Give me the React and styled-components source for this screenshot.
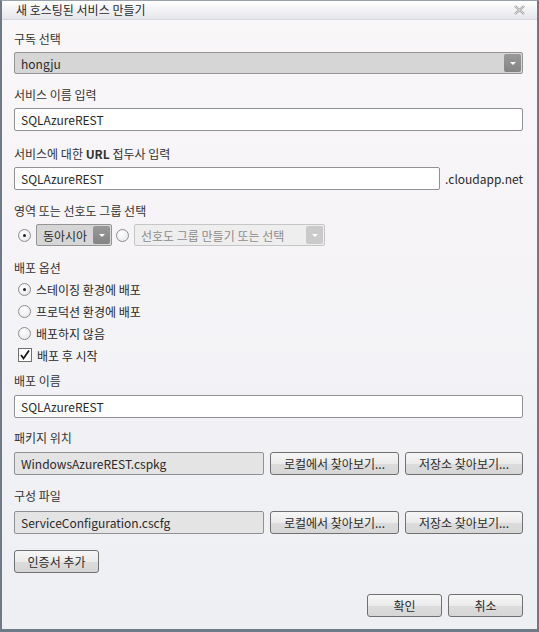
import styled, { createGlobalStyle } from "styled-components";

const Global = createGlobalStyle`
  html, body { margin: 0; padding: 0; background: #fff; }
  body { font-family: "Noto Sans CJK KR", "Noto Sans", sans-serif; }
`;

const Window = styled.div`
  width: 539px;
  height: 632px;
  box-sizing: border-box;
  border: 2px solid #6f7a88;
  border-top: 1px solid #9aa3ad;
  border-bottom-width: 3px;
  display: flex;
  flex-direction: column;
  background: linear-gradient(to bottom, #faf7f9 0%, #f6f4f7 35%, #edeff3 100%);
  color: #2a2a2a;
  font-size: 12px;
`;

const TitleBar = styled.div`
  height: 18px;
  flex-shrink: 0;
  display: flex;
  align-items: center;
  justify-content: space-between;
  padding: 0 12px 0 14px;
  background: linear-gradient(to bottom, #ffffff, #e6e6ec);
  border-bottom: 1px solid #d6d6de;
  font-size: 12px;
  line-height: 18px;
  color: #2a2a2a;
`;

const Body = styled.div`
  flex: 1;
  display: flex;
  flex-direction: column;
  padding: 11px 14px 0 12px;
`;

const Label = styled.div`
  height: 16px;
  line-height: 16px;
  font-size: 12px;
  color: #333;
  margin-top: ${p => p.$top || 0}px;
  margin-bottom: ${p => p.$bottom ?? 5}px;
`;

const Select = styled.div`
  height: 22px;
  box-sizing: border-box;
  width: ${p => p.$w || "100%"};
  display: flex;
  align-items: center;
  border: 1px solid ${p => (p.$disabled ? "#c6c6c6" : "#959595")};
  border-radius: 2px;
  background: ${p => (p.$disabled ? "#eeeeee" : "#d6d6d6")};
  color: ${p => (p.$disabled ? "#8c8c8c" : "#2a2a2a")};
  padding-left: 6px;
  padding-right: 1px;
  font-size: 12px;
`;

const SelectText = styled.span`
  flex: 1;
`;

const Arrow = styled.span`
  width: 17px;
  height: 18px;
  border-radius: 2px;
  background: ${p => (p.$disabled ? "#cacaca" : "linear-gradient(to bottom, #999, #848484)")};
  display: flex;
  align-items: center;
  justify-content: center;
  &::after {
    content: "";
    border-left: 3px solid transparent;
    border-right: 3px solid transparent;
    border-top: 3px solid #fff;
  }
`;

const Input = styled.div`
  height: 23px;
  box-sizing: border-box;
  flex: ${p => (p.$grow ? 1 : "none")};
  width: ${p => p.$w || "auto"};
  border: 1px solid #8f9194;
  border-radius: 2px;
  background: ${p => (p.$readonly ? "#e4e4e4" : "#ffffff")};
  padding-left: 6px;
  line-height: 21px;
  font-size: 12px;
  color: #2a2a2a;
`;

const Row = styled.div`
  display: flex;
  align-items: center;
  gap: ${p => p.$gap ?? 6}px;
  margin-top: ${p => p.$top || 0}px;
`;

const Suffix = styled.span`
  font-size: 12px;
  color: #2a2a2a;
`;

const Radio = styled.span`
  width: 13px;
  height: 13px;
  box-sizing: border-box;
  border-radius: 50%;
  border: 1px solid #8b8d90;
  background: radial-gradient(circle at 40% 35%, #ffffff, #e2e3e6);
  display: inline-flex;
  align-items: center;
  justify-content: center;
  flex-shrink: 0;
  &::after {
    content: "";
    width: 3px;
    height: 3px;
    border-radius: 50%;
    background: ${p => (p.$checked ? "#222" : "transparent")};
  }
`;

const Check = styled.span`
  width: 14px;
  height: 14px;
  box-sizing: border-box;
  border: 1px solid #707070;
  background: #fff;
  display: inline-flex;
  align-items: center;
  justify-content: center;
  flex-shrink: 0;
`;

const Option = styled.div`
  height: 22px;
  display: flex;
  align-items: center;
  gap: 5px;
  padding-left: 4px;
  font-size: 12px;
  color: #2a2a2a;
`;

const Button = styled.div`
  height: 23px;
  box-sizing: border-box;
  width: ${p => p.$w}px;
  border: 1px solid #707070;
  border-radius: 3px;
  background: linear-gradient(to bottom, #f6f6f6 0%, #ebebeb 50%, #dcdcdc 51%, #d6d6d6 100%);
  display: flex;
  align-items: center;
  justify-content: center;
  font-size: 12px;
  color: #2a2a2a;
  flex-shrink: 0;
`;

const Footer = styled.div`
  display: flex;
  justify-content: flex-end;
  gap: 6px;
  margin-top: 21px;
`;

function CloseIcon() {
  return (
    <svg width="11" height="10" viewBox="0 0 11 10">
      <path d="M1 1 L10 9 M10 1 L1 9" stroke="#9a9a9a" strokeWidth="2.2" fill="none" />
      <path d="M1 1 L10 9 M10 1 L1 9" stroke="#f4f4f4" strokeWidth="0.8" fill="none" />
    </svg>
  );
}

function CheckMark() {
  return (
    <svg width="12" height="12" viewBox="0 0 12 12">
      <path d="M2 6 L4.5 9.5 L10 1.5" stroke="#1a1a1a" strokeWidth="1.8" fill="none" />
    </svg>
  );
}

export default function App() {
  return (
    <>
      <Global />
      <Window>
        <TitleBar>
          <span>새 호스팅된 서비스 만들기</span>
          <CloseIcon />
        </TitleBar>
        <Body>
          <Label>구독 선택</Label>
          <Select>
            <SelectText>hongju</SelectText>
            <Arrow />
          </Select>

          <Label $top={13}>서비스 이름 입력</Label>
          <Input>SQLAzureREST</Input>

          <Label $top={15}>
            서비스에 대한 <b>URL</b> 접두사 입력
          </Label>
          <Row $gap={5}>
            <Input $grow>SQLAzureREST</Input>
            <Suffix>.cloudapp.net</Suffix>
          </Row>

          <Label $top={13}>영역 또는 선호도 그룹 선택</Label>
          <Row $gap={0}>
            <Option>
              <Radio $checked />
              <Select $w="76px">
                <SelectText>동아시아</SelectText>
                <Arrow />
              </Select>
            </Option>
            <Option>
              <Radio />
              <Select $w="191px" $disabled>
                <SelectText>선호도 그룹 만들기 또는 선택</SelectText>
                <Arrow $disabled />
              </Select>
            </Option>
          </Row>

          <Label $top={14} $bottom={2}>배포 옵션</Label>
          <Option>
            <Radio $checked />
            스테이징 환경에 배포
          </Option>
          <Option>
            <Radio />
            프로덕션 환경에 배포
          </Option>
          <Option>
            <Radio />
            배포하지 않음
          </Option>
          <Option>
            <Check>
              <CheckMark />
            </Check>
            배포 후 시작
          </Option>

          <Label $top={7} $bottom={6}>배포 이름</Label>
          <Input>SQLAzureREST</Input>

          <Label $top={12} $bottom={6}>패키지 위치</Label>
          <Row $gap={6}>
            <Input $w="250px" $readonly>WindowsAzureREST.cspkg</Input>
            <Button $w={129}>로컬에서 찾아보기...</Button>
            <Button $w={118}>저장소 찾아보기...</Button>
          </Row>

          <Label $top={13} $bottom={7}>구성 파일</Label>
          <Row $gap={6}>
            <Input $w="250px" $readonly>ServiceConfiguration.cscfg</Input>
            <Button $w={129}>로컬에서 찾아보기...</Button>
            <Button $w={118}>저장소 찾아보기...</Button>
          </Row>

          <Row $top={16}>
            <Button $w={85}>인증서 추가</Button>
          </Row>

          <Footer>
            <Button $w={75}>확인</Button>
            <Button $w={75}>취소</Button>
          </Footer>
        </Body>
      </Window>
    </>
  );
}
